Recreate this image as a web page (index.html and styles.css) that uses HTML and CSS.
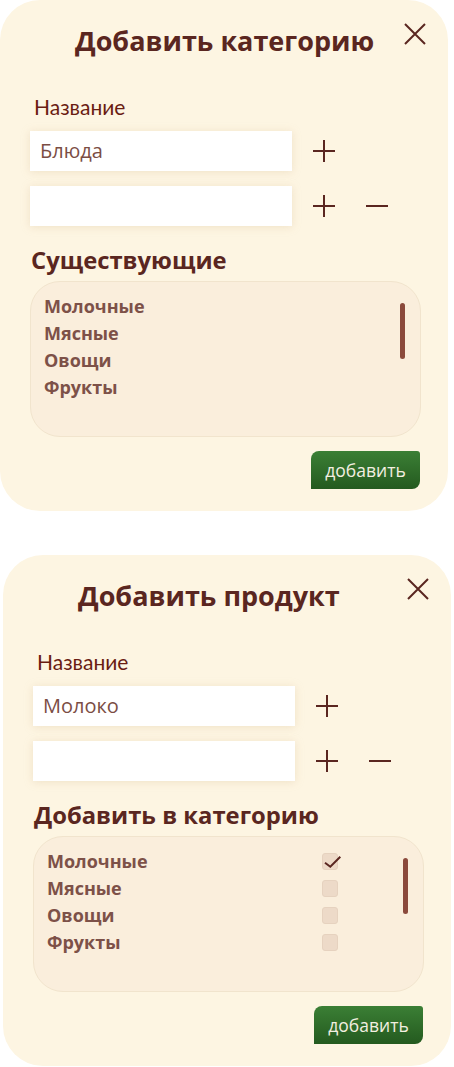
FILE: index.html
```html
<!DOCTYPE html>
<html lang="ru">
<head>
<meta charset="utf-8">
<title>Добавить</title>
<link rel="stylesheet" href="styles.css">
</head>
<body>
<div class="card">
  <h1 class="title">Добавить категорию</h1>
  <svg class="close" width="22" height="22" viewBox="0 0 22 22"><path d="M1 1L21 21M21 1L1 21" stroke="#5a2620" stroke-width="2" fill="none"/></svg>
  <div class="label">Название</div>
  <div class="rows">
    <div class="row">
      <div class="input">Блюда</div>
      <svg class="icon plus" width="22" height="22" viewBox="0 0 22 22"><path d="M0 11H22M11 0V22" stroke="#5a2620" stroke-width="2" fill="none"/></svg>
    </div>
    <div class="row">
      <div class="input"></div>
      <svg class="icon plus" width="22" height="22" viewBox="0 0 22 22"><path d="M0 11H22M11 0V22" stroke="#5a2620" stroke-width="2" fill="none"/></svg>
      <svg class="icon minus" width="22" height="22" viewBox="0 0 22 22"><path d="M0 11H22" stroke="#5a2620" stroke-width="2" fill="none"/></svg>
    </div>
  </div>
  <h2 class="section">Существующие</h2>
  <div class="list">
    <div class="item">Молочные</div>
    <div class="item">Мясные</div>
    <div class="item">Овощи</div>
    <div class="item">Фрукты</div>
    <div class="scroll"></div>
  </div>
  <div class="actions"><button class="btn">добавить</button></div>
</div>

<div class="card second">
  <h1 class="title">Добавить продукт</h1>
  <svg class="close" width="22" height="22" viewBox="0 0 22 22"><path d="M1 1L21 21M21 1L1 21" stroke="#5a2620" stroke-width="2" fill="none"/></svg>
  <div class="label">Название</div>
  <div class="rows">
    <div class="row">
      <div class="input">Молоко</div>
      <svg class="icon plus" width="22" height="22" viewBox="0 0 22 22"><path d="M0 11H22M11 0V22" stroke="#5a2620" stroke-width="2" fill="none"/></svg>
    </div>
    <div class="row">
      <div class="input"></div>
      <svg class="icon plus" width="22" height="22" viewBox="0 0 22 22"><path d="M0 11H22M11 0V22" stroke="#5a2620" stroke-width="2" fill="none"/></svg>
      <svg class="icon minus" width="22" height="22" viewBox="0 0 22 22"><path d="M0 11H22" stroke="#5a2620" stroke-width="2" fill="none"/></svg>
    </div>
  </div>
  <h2 class="section">Добавить в категорию</h2>
  <div class="list">
    <div class="item check-row"><span>Молочные</span><span class="box checked"><svg class="tick" width="20" height="16" viewBox="0 0 20 16"><path d="M2 8.7L7.3 12.7L17.3 2.7" stroke="#5a2620" stroke-width="2" fill="none"/></svg></span></div>
    <div class="item check-row"><span>Мясные</span><span class="box"></span></div>
    <div class="item check-row"><span>Овощи</span><span class="box"></span></div>
    <div class="item check-row"><span>Фрукты</span><span class="box"></span></div>
    <div class="scroll"></div>
  </div>
  <div class="actions"><button class="btn">добавить</button></div>
</div>
</body>
</html>
```

FILE: styles.css
```css
* { box-sizing: border-box; }

body {
  margin: 0;
  background: #ffffff;
  font-family: "Open Sans", "Noto Sans", sans-serif;
}

.card {
  position: relative;
  width: 448px;
  background: #fdf5e2;
  border-radius: 40px;
  padding: 22px 27px 22px 30px;
}

.card.second {
  margin-top: 44px;
  margin-left: 3px;
}

.title {
  margin: 0;
  padding-left: 45px;
  font-family: "Open Sans", sans-serif;
  font-weight: 700;
  font-size: 27px;
  line-height: 38px;
  color: #5a2620;
}

.close {
  position: absolute;
  top: 23px;
  right: 22px;
  display: block;
}

.label {
  margin-top: 35px;
  padding-left: 4px;
  font-family: "Lato", sans-serif;
  font-size: 21px;
  line-height: 24px;
  color: #6a1c12;
}

.rows {
  margin-top: 12px;
  display: flex;
  flex-direction: column;
  gap: 15px;
}

.row {
  display: flex;
  align-items: center;
}

.input {
  width: 262px;
  height: 40px;
  background: #ffffff;
  box-shadow: 0 1px 8px rgba(215, 190, 150, 0.35);
  padding-left: 10px;
  font-family: "Open Sans", sans-serif;
  font-size: 20px;
  line-height: 40px;
  color: #7b4d44;
}

.icon { display: block; flex: none; }
.plus { margin-left: 21px; }
.minus { margin-left: 31px; }

.section {
  margin: 18px 0 0 1px;
  font-family: "Open Sans", sans-serif;
  font-weight: 700;
  font-size: 23.8px;
  line-height: 32px;
  color: #5a2620;
}

.list {
  position: relative;
  margin-top: 5px;
  width: 391px;
  height: 156px;
  background: #faeedc;
  border: 1px solid #f1e4cd;
  border-radius: 30px;
  padding: 11px 14px 0 13px;
}

.item {
  font-family: "Open Sans", sans-serif;
  font-weight: 700;
  font-size: 18px;
  line-height: 27px;
  color: #7d5148;
}

.check-row {
  display: grid;
  grid-template-columns: 275px 16px;
  align-items: center;
}

.box {
  position: relative;
  display: block;
  width: 16px;
  height: 17px;
  background: #eddac8;
  border: 1px solid #e6d2bf;
  border-radius: 3px;
}

.tick {
  position: absolute;
  left: 0;
  top: 0;
  overflow: visible;
}

.scroll {
  position: absolute;
  top: 21px;
  right: 15px;
  width: 5px;
  height: 56px;
  background: #8b4a3c;
  border-radius: 3px;
}

.actions {
  margin-top: 14px;
  display: flex;
  justify-content: flex-end;
  padding-right: 1px;
}

.btn {
  width: 109px;
  height: 38px;
  border: none;
  border-radius: 8px 3px 8px 0;
  background: linear-gradient(#3b7f35, #245a1f);
  color: #f3efe0;
  font-family: "Open Sans", sans-serif;
  font-size: 17.5px;
  line-height: 38px;
  padding: 0;
}
```
